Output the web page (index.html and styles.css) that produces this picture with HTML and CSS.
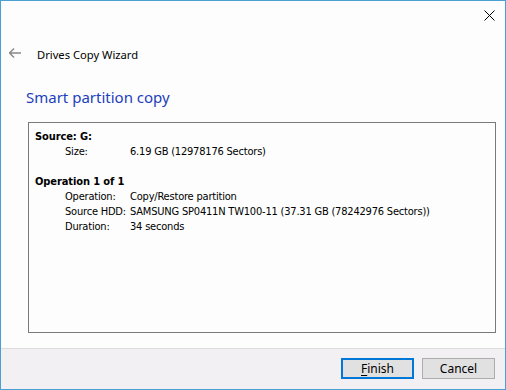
FILE: index.html
```html
<!DOCTYPE html>
<html>
<head>
<meta charset="utf-8">
<link rel="stylesheet" href="styles.css">
</head>
<body>
<div class="window">
  <div class="titlebar">
    <span class="close" aria-label="Close">
      <svg width="11" height="11" viewBox="0 0 11 11"><path d="M0.5 0.5 L10.5 10.5 M10.5 0.5 L0.5 10.5" stroke="#000" stroke-width="1" fill="none"/></svg>
    </span>
  </div>
  <div class="nav">
    <svg class="back" width="12" height="10" viewBox="0 0 12 10"><path d="M0.5 5 H12 M5 0.5 L0.5 5 L5 9.5" stroke="#888" stroke-width="1.4" fill="none"/></svg>
    <span class="nav-text">Drives Copy Wizard</span>
  </div>
  <h1 class="heading">Smart partition copy</h1>
  <div class="summary">
    <div class="group">
      <div class="group-title">Source: G:</div>
      <div class="rows">
        <span class="label">Size:</span><span class="value">6.19 GB (12978176 Sectors)</span>
      </div>
    </div>
    <div class="group">
      <div class="group-title">Operation 1 of 1</div>
      <div class="rows">
        <span class="label">Operation:</span><span class="value">Copy/Restore partition</span>
        <span class="label">Source HDD:</span><span class="value">SAMSUNG SP0411N TW100-11 (37.31 GB (78242976 Sectors))</span>
        <span class="label">Duration:</span><span class="value">34 seconds</span>
      </div>
    </div>
  </div>
  <div class="spacer"></div>
  <div class="footer">
    <button class="btn btn-default"><u>F</u>inish</button>
    <button class="btn">Cancel</button>
  </div>
</div>
</body>
</html>
```
FILE: styles.css
```css
html, body {
  margin: 0;
  padding: 0;
  background: #fcfdfc;
}
.window {
  width: 506px;
  height: 390px;
  box-sizing: border-box;
  border: 1px solid #4aa0d2;
  background: #fcfdfc;
  display: flex;
  flex-direction: column;
  font-family: "Noto Sans", "Open Sans", sans-serif;
  color: #000;
}
.titlebar {
  height: 30px;
  display: flex;
  justify-content: flex-end;
  align-items: flex-start;
}
.close {
  display: block;
  width: 11px;
  height: 11px;
  margin-top: 9px;
  margin-right: 10px;
}
.close svg { display: block; }
.nav {
  margin-top: 15px;
  height: 16px;
  display: flex;
  align-items: center;
  padding-left: 8px;
}
.back { display: block; margin-top: -2px; }
.nav-text {
  margin-left: 16px;
  font-size: 11.2px;
  line-height: 16px;
  padding-top: 1px;
}
.heading {
  margin: 24px 0 0 25px;
  font-size: 15px;
  line-height: 22px;
  font-weight: normal;
  color: #1d3fbd;
  height: 22px;
}
.summary {
  margin: 14px 9px 0 27px;
  height: 211px;
  box-sizing: border-box;
  border: 1px solid #7a7a7a;
  padding: 6px 6px;
  font-family: "DejaVu Sans Condensed", "DejaVu Sans", sans-serif;
  font-size: 11px;
  line-height: 15px;
  letter-spacing: -0.2px;
}
.group + .group { margin-top: 15px; }
.group-title { font-weight: bold; letter-spacing: -0.1px; }
.rows {
  display: grid;
  grid-template-columns: 65px auto;
  justify-content: start;
  padding-left: 30px;
}
.spacer { flex: 1; }
.footer {
  border-top: 1px solid #dcdedc;
  background: #f2f0f2;
  display: flex;
  justify-content: flex-end;
  align-items: flex-start;
  gap: 8px;
  padding: 9px 10px 0 0;
  box-sizing: border-box;
  height: 41px;
}
.btn {
  width: 73px;
  height: 21px;
  box-sizing: border-box;
  border: 1px solid #adadad;
  background: #e1e1e1;
  font-family: "Noto Sans", "Open Sans", sans-serif;
  font-size: 12px;
  line-height: 17px;
  padding: 0;
  color: #000;
}
.btn u { text-decoration-thickness: 1px; text-underline-offset: 2px; }
.btn-default {
  border: 2px solid #0078d7;
}
```
